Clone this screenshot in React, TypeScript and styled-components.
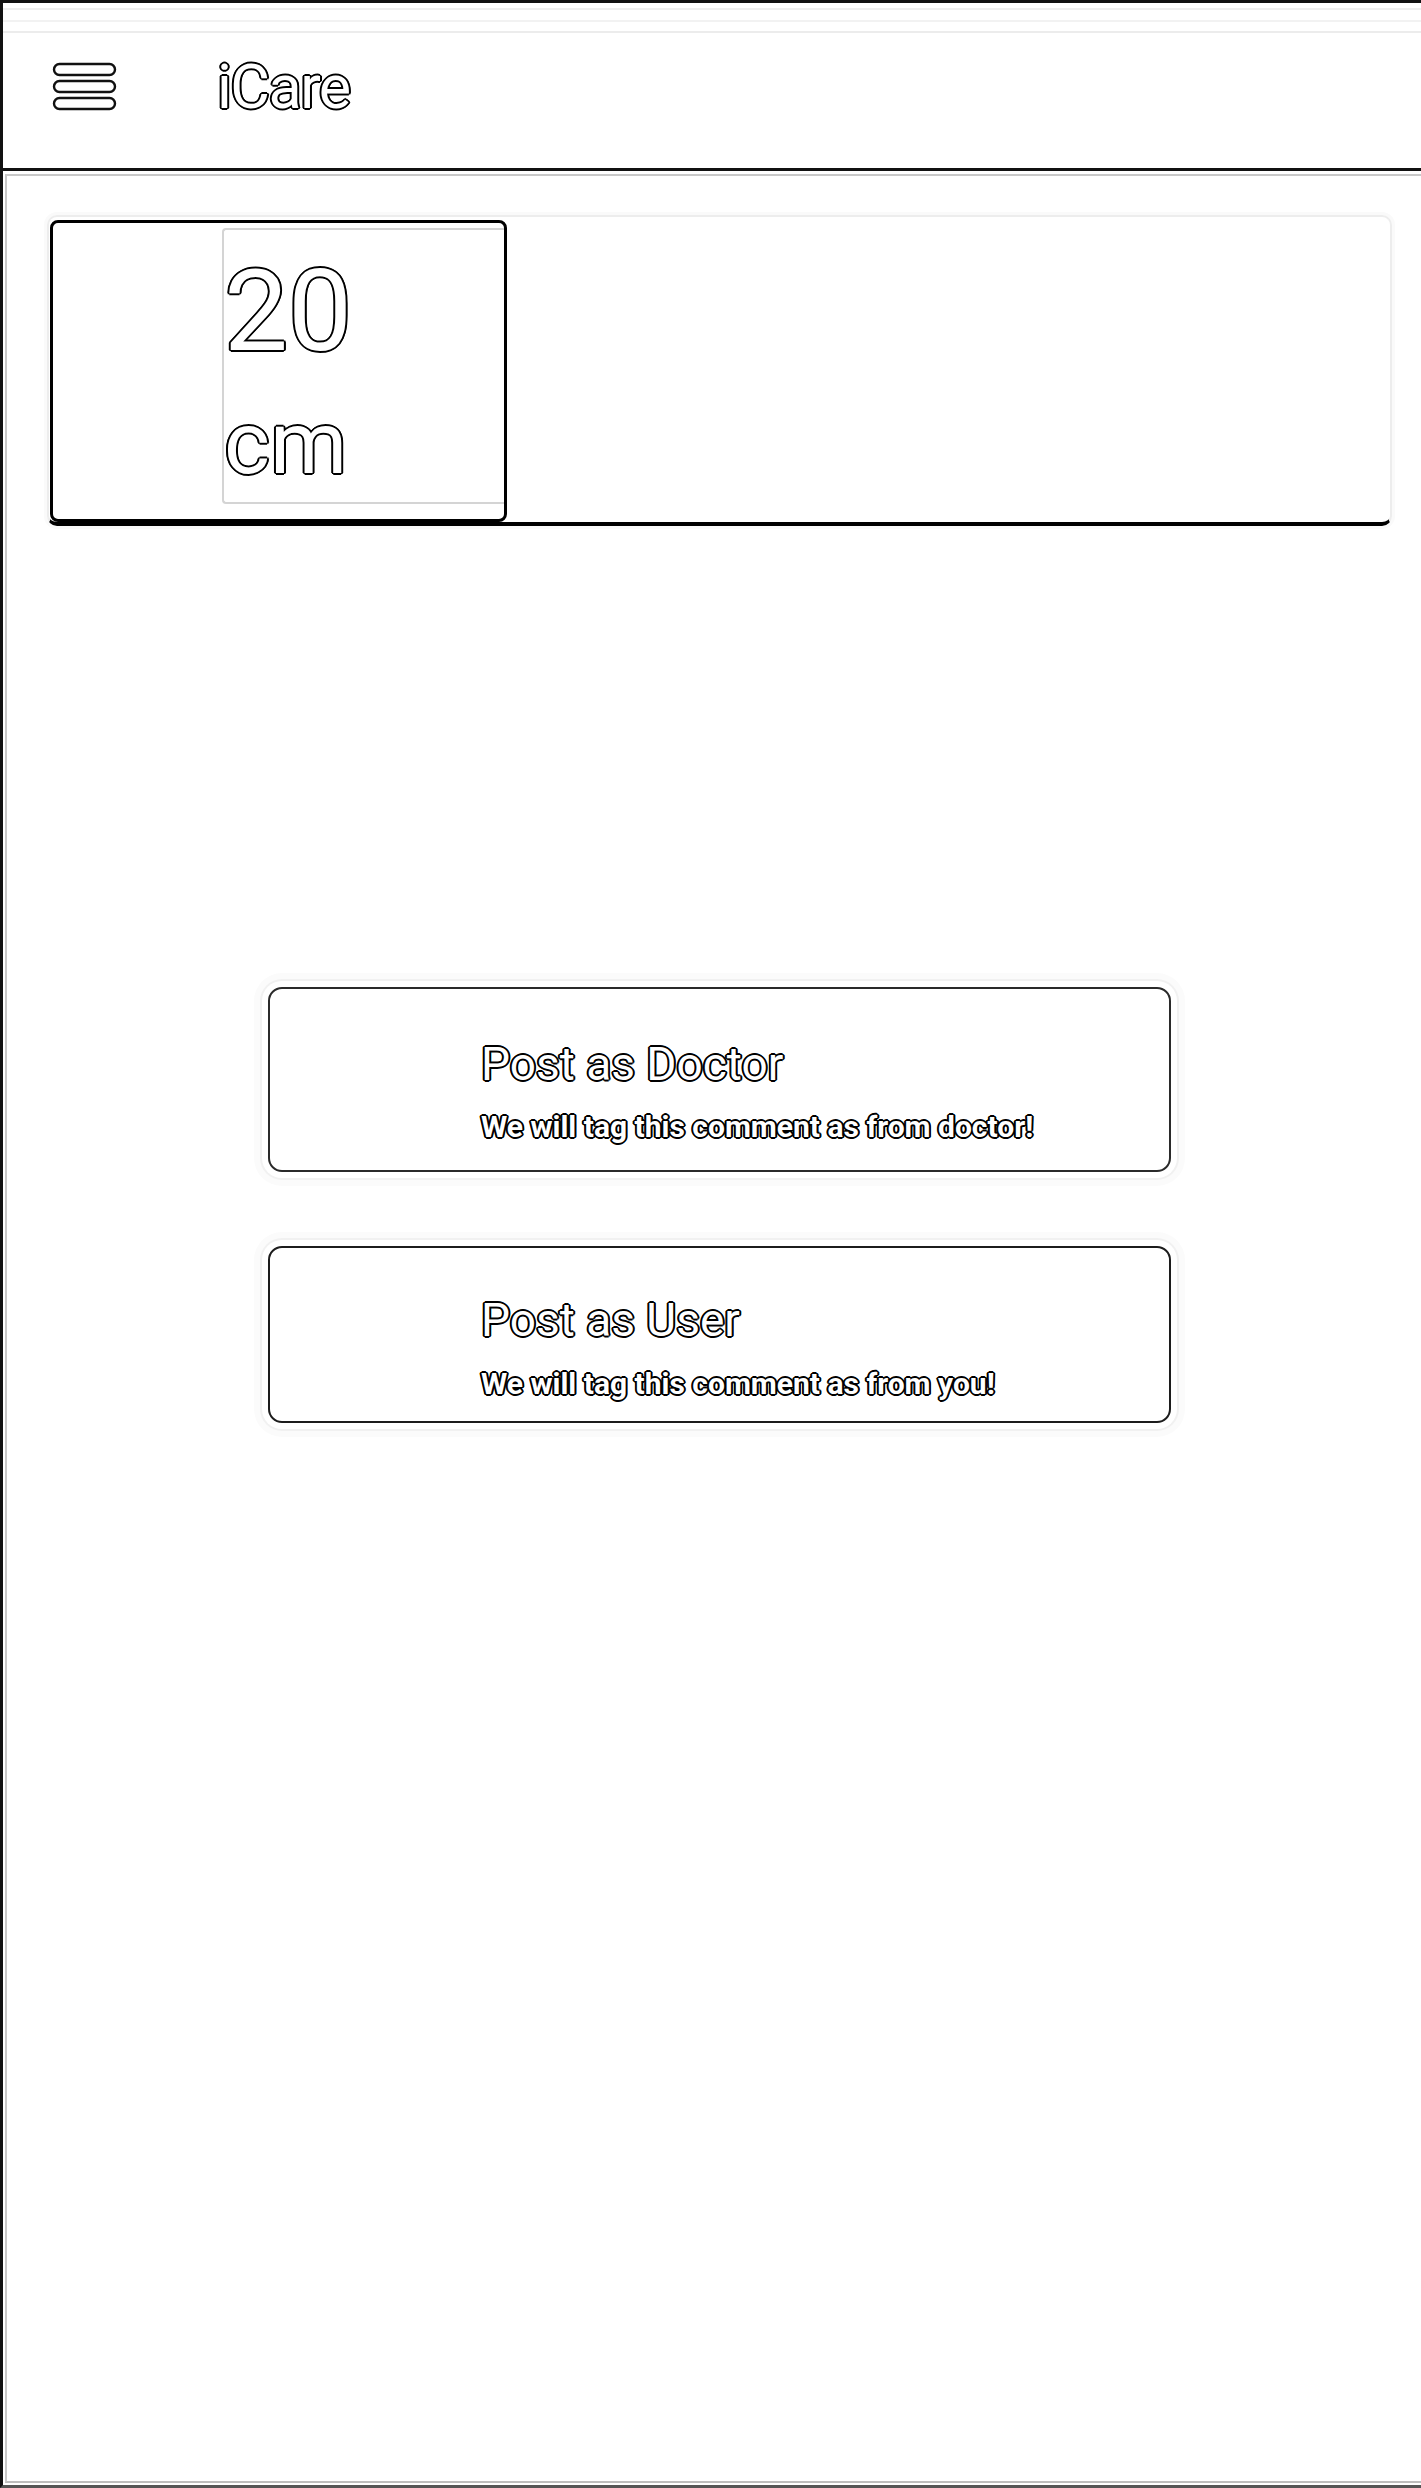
import React from "react";
import styled, { createGlobalStyle, css } from "styled-components";

const GlobalStyle = createGlobalStyle`
  html, body {
    margin: 0;
    padding: 0;
    background: #ffffff;
  }
  body {
    font-family: Roboto, "Noto Sans", "Liberation Sans", sans-serif;
  }
  * { box-sizing: border-box; }
`;

const outline = (w: number, c = "#000") => css`
  color: #ffffff;
  text-shadow:
    ${-w}px 0 0 ${c},
    ${w}px 0 0 ${c},
    0 ${-w}px 0 ${c},
    0 ${w}px 0 ${c},
    ${-w * 0.7}px ${-w * 0.7}px 0 ${c},
    ${w * 0.7}px ${-w * 0.7}px 0 ${c},
    ${-w * 0.7}px ${w * 0.7}px 0 ${c},
    ${w * 0.7}px ${w * 0.7}px 0 ${c};
`;

const Page = styled.div`
  width: 1421px;
  min-height: 2488px;
  display: flex;
  flex-direction: column;
  border-top: 3px solid #111;
  border-left: 3px solid #111;
  border-bottom: 3px solid #555;
  background: #fff;
`;

const AppBar = styled.header`
  height: 168px;
  display: flex;
  align-items: center;
  padding-left: 49px;
  padding-top: 3px;
  border-bottom: 3px solid #111;
  background: linear-gradient(
    #fff 0px,
    #fff 5px,
    #eeeeee 5px,
    #eeeeee 7px,
    #fff 7px,
    #fff 17px,
    #f2f2f2 17px,
    #f2f2f2 19px,
    #fff 19px,
    #fff 28px,
    #ececec 28px,
    #ececec 30px,
    #fff 30px
  );
`;

const MenuButton = styled.button`
  width: 66px;
  height: 50px;
  padding: 0;
  border: none;
  background: transparent;
  display: flex;
  align-items: center;
  justify-content: center;
`;

const AppTitle = styled.h1`
  margin: 0 0 0 99px;
  font-family: Roboto, "Noto Sans", sans-serif;
  font-weight: 400;
  font-size: 61px;
  line-height: 70px;
  letter-spacing: -1.5px;
  ${outline(2)}
`;

const Main = styled.main`
  flex: 1;
  margin: 3px 0 2px 2px;
  border-top: 2px solid #c8c8c8;
  border-left: 2px solid #c8c8c8;
  border-bottom: 2px solid #bdbdbd;
  padding: 39px 29px 0 40px;
  display: flex;
  flex-direction: column;
`;

const MeasureCard = styled.section`
  height: 311px;
  border: 2px solid #ededed;
  border-bottom: 4px solid #000;
  border-radius: 10px;
  padding: 3px 0 0 1px;
  display: flex;
  box-shadow: 0 0 0 3px #fafafa;
`;

const ValueBox = styled.div`
  width: 457px;
  height: 302px;
  border: 3px solid #000;
  border-radius: 8px;
  padding: 5px 0 15px 169px;
  display: flex;
`;

const ValueBlock = styled.div`
  flex: 1;
  border: 2px solid #d4d4d4;
  border-right: none;
  border-radius: 4px 0 0 4px;
  padding-top: 16px;
  display: flex;
  flex-direction: column;
`;

const ValueNumber = styled.span`
  font-family: Roboto, "Noto Sans", sans-serif;
  font-size: 114px;
  line-height: 130px;
  font-weight: 400;
  ${outline(2)}
`;

const ValueUnit = styled.span`
  margin-top: 17px;
  font-family: Roboto, "Noto Sans", sans-serif;
  font-size: 88px;
  line-height: 100px;
  font-weight: 400;
  ${outline(2)}
`;

const Options = styled.div`
  margin-top: 461px;
  display: flex;
  flex-direction: column;
  align-items: center;
  gap: 74px;
`;

const OptionButton = styled.button<{ $focused?: boolean }>`
  width: 903px;
  background: #fff;
  border: 2px solid ${(p) => (p.$focused ? "#2a2a2a" : "#1c1c1c")};
  border-radius: 14px;
  text-align: left;
  padding: ${(p) => (p.$focused ? "48px 0 25px 211px" : "45px 0 19px 211px")};
  display: flex;
  flex-direction: column;
  gap: ${(p) => (p.$focused ? "18px" : "19px")};
  box-shadow:
    0 0 0 6px #fff,
    0 0 0 8px #f1f1f1,
    0 0 0 14px #fbfbfb;
  cursor: pointer;
`;

const OptionTitle = styled.span`
  font-family: Roboto, "Noto Sans", sans-serif;
  font-size: 46px;
  line-height: 54px;
  font-weight: 400;
  ${outline(2)}
`;

const OptionHint = styled.span`
  font-family: Roboto, "Noto Sans", sans-serif;
  font-size: 30px;
  line-height: 36px;
  font-weight: 700;
  ${outline(2)}
`;

const MenuIcon = () => (
  <svg width="66" height="50" viewBox="0 0 66 50" aria-hidden="true">
    {[2, 19, 36].map((y) => (
      <rect
        key={y}
        x="2"
        y={y}
        width="61"
        height="11"
        rx="5.5"
        fill="#fff"
        stroke="#111"
        strokeWidth="2.4"
      />
    ))}
  </svg>
);

const options = [
  { title: "Post as Doctor", hint: "We will tag this comment as from doctor!", focused: true },
  { title: "Post as User", hint: "We will tag this comment as from you!", focused: false },
];

export default function App() {
  return (
    <>
      <GlobalStyle />
      <Page>
        <AppBar>
          <MenuButton aria-label="Menu">
            <MenuIcon />
          </MenuButton>
          <AppTitle>iCare</AppTitle>
        </AppBar>
        <Main>
          <MeasureCard>
            <ValueBox>
              <ValueBlock>
                <ValueNumber>20</ValueNumber>
                <ValueUnit>cm</ValueUnit>
              </ValueBlock>
            </ValueBox>
          </MeasureCard>
          <Options>
            {options.map((o) => (
              <OptionButton key={o.title} $focused={o.focused}>
                <OptionTitle>{o.title}</OptionTitle>
                <OptionHint>{o.hint}</OptionHint>
              </OptionButton>
            ))}
          </Options>
        </Main>
      </Page>
    </>
  );
}
